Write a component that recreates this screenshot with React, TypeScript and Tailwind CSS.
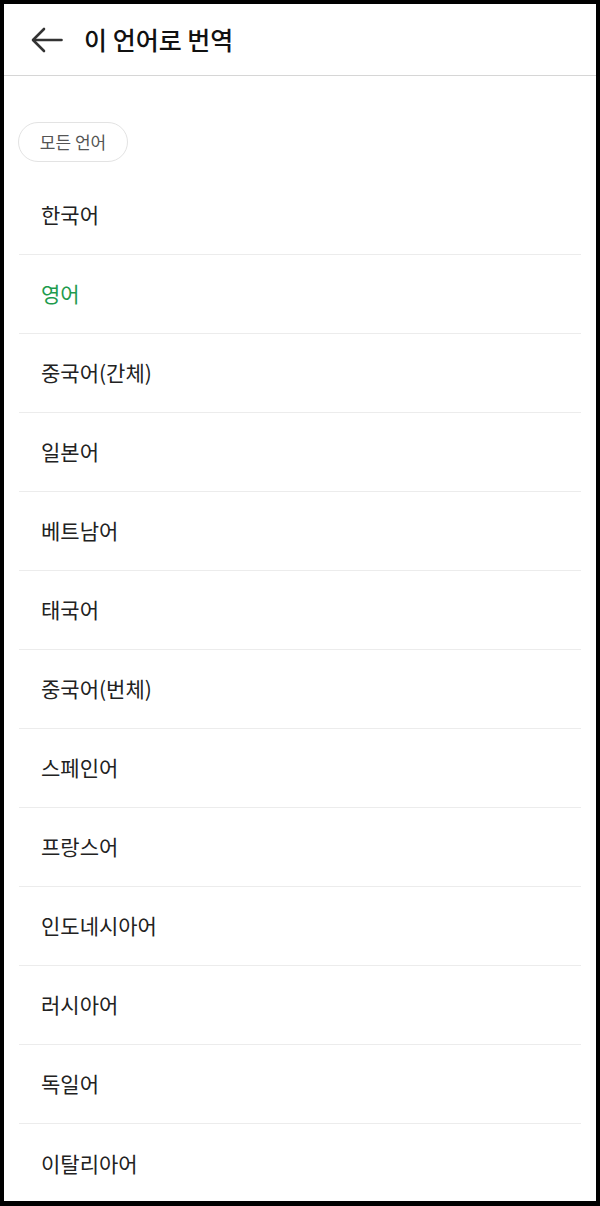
const languages = [
  "한국어",
  "영어",
  "중국어(간체)",
  "일본어",
  "베트남어",
  "태국어",
  "중국어(번체)",
  "스페인어",
  "프랑스어",
  "인도네시아어",
  "러시아어",
  "독일어",
  "이탈리아어",
];

export default function App() {
  return (
    <div
      className="w-[600px] h-[1206px] bg-black pt-[4px] pl-[4px] pr-[4px] pb-[5px]"
      style={{ fontFamily: '"Noto Sans CJK KR", "Noto Sans", sans-serif' }}
    >
      <div className="h-full bg-white overflow-hidden flex flex-col">
        <header className="h-[72px] shrink-0 flex items-center border-b border-[#d6d6d6]">
          <button className="ml-[27px] w-[32px] h-[26px] flex items-center justify-center text-[#333]">
            <svg width="32" height="26" viewBox="0 0 32 26" fill="none" stroke="currentColor" strokeWidth="2.6" strokeLinecap="round" strokeLinejoin="round">
              <path d="M30.5 13H2.5" />
              <path d="M13 2 L2 13 L13 24" />
            </svg>
          </button>
          <h1 className="ml-[21px] text-[25px] font-medium text-[#111] leading-none">이 언어로 번역</h1>
        </header>

        <div className="pt-[46px] px-[14px]">
          <div className="inline-flex items-center justify-center h-[40px] w-[110px] rounded-full border border-[#e3e3e3] text-[17px] text-[#555]">
            모든 언어
          </div>

          <ul className="mt-[14px] mx-[1px]">
            {languages.map((lang, i) => (
              <li
                key={lang}
                className={
                  "h-[79px] flex items-center pl-[22px] text-[21px] " +
                  (i < languages.length - 1 ? "border-b border-[#ececec] " : "") +
                  (lang === "영어" ? "text-[#1e9b4e]" : "text-[#222]")
                }
              >
                {lang}
              </li>
            ))}
          </ul>
        </div>
      </div>
    </div>
  );
}
